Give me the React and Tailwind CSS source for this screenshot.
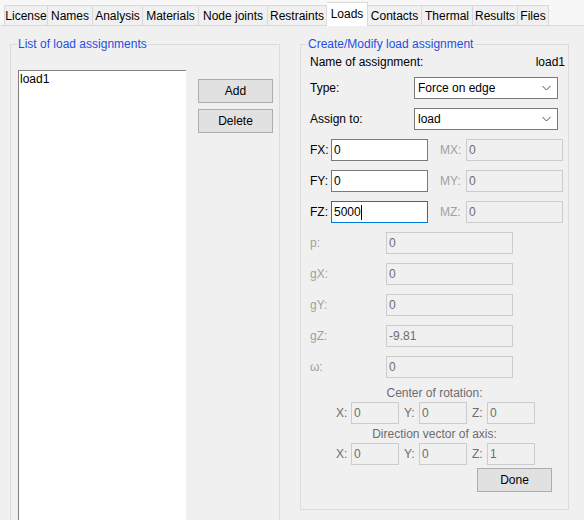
import React from 'react'

const tabs = [
  { name: 'License', w: 'w-[44px]' },
  { name: 'Names', w: 'w-[45px]' },
  { name: 'Analysis', w: 'w-[50px]' },
  { name: 'Materials', w: 'w-[56px]' },
  { name: 'Node joints', w: 'w-[69px]' },
  { name: 'Restraints', w: 'w-[59px]' },
  { name: 'Loads', w: 'w-[41px]', active: true },
  { name: 'Contacts', w: 'w-[54px]' },
  { name: 'Thermal', w: 'w-[51px]' },
  { name: 'Results', w: 'w-[45px]' },
  { name: 'Files', w: 'w-[31px]' },
]

function Chevron() {
  return (
    <svg width="9" height="6" viewBox="0 0 9 6" className="text-[#505050]">
      <path d="M0.5 1 L4.5 5 L8.5 1" fill="none" stroke="currentColor" strokeWidth="1" />
    </svg>
  )
}

function Combo({ value }) {
  return (
    <div className="w-[144px] h-[22px] bg-white border border-[#7a7a7a] flex items-center pl-[3px] pr-[6px]">
      <span className="flex-1">{value}</span>
      <Chevron />
    </div>
  )
}

function TextBox({ value, w, disabled, focused, caret }) {
  const border = focused ? 'border-[#0078d7]' : disabled ? 'border-[#cccccc]' : 'border-[#7a7a7a]'
  const bg = disabled ? 'bg-[#f0f0f0] text-[#6d6d6d]' : 'bg-white text-black'
  return (
    <div className={`${w} h-[22px] border ${border} ${bg} flex items-center pl-[2px]`}>
      <span>{value}</span>
      {caret && <span className="w-px h-[15px] bg-black" />}
    </div>
  )
}

function Button({ label }) {
  return (
    <button className="w-[75px] h-[24px] bg-[#e1e1e1] border border-[#adadad] text-black flex items-center justify-center">
      {label}
    </button>
  )
}

export default function App() {
  const forces = [
    { f: 'FX', v: '0', m: 'MX' },
    { f: 'FY', v: '0', m: 'MY' },
    { f: 'FZ', v: '5000', m: 'MZ', focused: true },
  ]
  const scalars = [
    { l: 'p:', v: '0' },
    { l: 'gX:', v: '0' },
    { l: 'gY:', v: '0' },
    { l: 'gZ:', v: '-9.81' },
    { l: 'ω:', v: '0' },
  ]

  return (
    <div className="w-[584px] h-[520px] overflow-hidden bg-[#f0f0f0] text-[12px] leading-[16px] text-black font-['Liberation_Sans',Arial,sans-serif]">
      {/* tab strip */}
      <div className="h-[26px] flex items-end pl-[4px] bg-[#f7f7f7] border-b border-[#d9d9d9]">
        {tabs.map((t, i) =>
          t.active ? (
            <div
              key={t.name}
              className={`${t.w} h-[24px] -mb-px bg-white border-t border-r border-[#d9d9d9] flex items-center justify-center pb-[1px]`}
            >
              {t.name}
            </div>
          ) : (
            <div
              key={t.name}
              className={`${t.w} h-[20px] bg-[#f0f0f0] border-t border-r border-[#d9d9d9] ${i === 0 ? 'border-l' : ''} flex items-center justify-center`}
            >
              {t.name}
            </div>
          )
        )}
      </div>

      <div className="flex items-start pl-[10px] gap-[20px] mt-[10px]">
        {/* left group */}
        <fieldset className="w-[270px] min-w-0 h-[520px] border border-[#dcdcdc] pl-[7px] pr-[6px]">
          <legend className="ml-[-1px] px-px text-[#1f4fe0]">List of load assignments</legend>
          <div className="flex items-start gap-[12px] mt-[18px]">
            <div className="w-[168px] h-[460px] bg-white border-l border-t border-[#828282] pl-[1px]">
              load1
            </div>
            <div className="flex flex-col gap-[6px] mt-[9px]">
              <Button label="Add" />
              <Button label="Delete" />
            </div>
          </div>
        </fieldset>

        {/* right group */}
        <fieldset className="w-[269px] min-w-0 border border-[#dcdcdc] pl-[9px] pr-[3px] pb-[17px]">
          <legend className="ml-[-3px] px-px text-[#1f4fe0]">Create/Modify load assignment</legend>
          <div className="flex justify-between mt-[2px]">
            <span>Name of assignment:</span>
            <span>load1</span>
          </div>

          <div className="flex items-center mt-[7px]">
            <span className="w-[104px]">Type:</span>
            <Combo value="Force on edge" />
          </div>
          <div className="flex items-center mt-[9px]">
            <span className="w-[104px]">Assign to:</span>
            <Combo value="load" />
          </div>

          {forces.map((r) => (
            <div key={r.f} className="flex items-center mt-[9px]">
              <span className="w-[21px]">{r.f}:</span>
              <TextBox value={r.v} w="w-[97px]" focused={r.focused} caret={r.focused} />
              <span className="w-[26px] ml-[12px] text-[#a0a0a0]">{r.m}:</span>
              <TextBox value="0" w="w-[97px]" disabled />
            </div>
          ))}

          {scalars.map((r) => (
            <div key={r.l} className="flex items-center mt-[9px]">
              <span className="w-[76px] text-[#a0a0a0]">{r.l}</span>
              <TextBox value={r.v} w="w-[127px]" disabled />
            </div>
          ))}

          <div className="mt-[7px] text-center text-[#6d6d6d] pr-[6px]">Center of rotation:</div>
          <div className="flex gap-[5px] ml-[26px] mt-[1px]">
            {[['X:', '0'], ['Y:', '0'], ['Z:', '0']].map(([l, v]) => (
              <div key={l} className="flex items-center">
                <span className="w-[15px] text-[#6d6d6d]">{l}</span>
                <TextBox value={v} w="w-[48px]" disabled />
              </div>
            ))}
          </div>

          <div className="mt-[2px] text-center text-[#6d6d6d] pr-[6px]">Direction vector of axis:</div>
          <div className="flex gap-[5px] ml-[26px] mt-[1px]">
            {[['X:', '0'], ['Y:', '0'], ['Z:', '1']].map(([l, v]) => (
              <div key={l} className="flex items-center">
                <span className="w-[15px] text-[#6d6d6d]">{l}</span>
                <TextBox value={v} w="w-[48px]" disabled />
              </div>
            ))}
          </div>

          <div className="flex justify-end mt-[3px] pr-[13px]">
            <Button label="Done" />
          </div>
        </fieldset>
      </div>
    </div>
  )
}
